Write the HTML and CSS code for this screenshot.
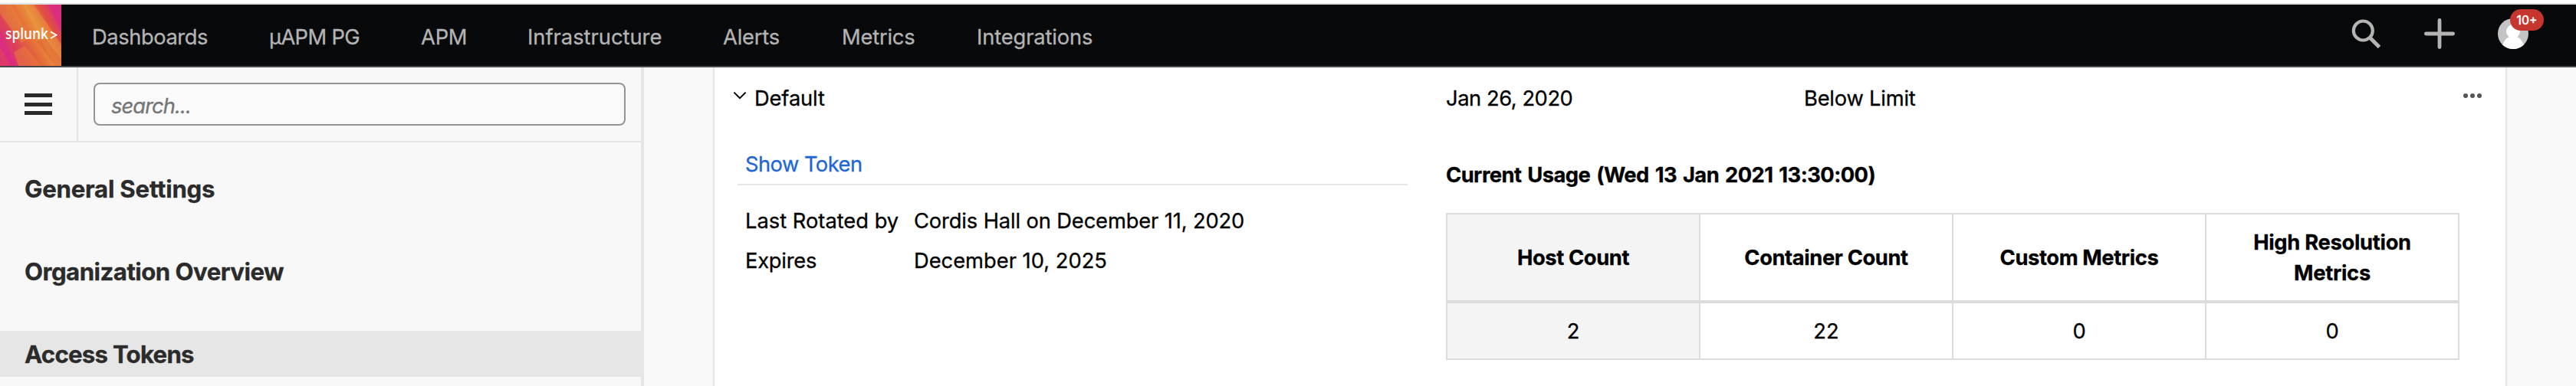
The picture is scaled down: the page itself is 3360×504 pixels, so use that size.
FILE: index.html
```html
<!DOCTYPE html>
<html lang="en">
<head>
<meta charset="utf-8">
<title>Access Tokens</title>
<link rel="stylesheet" href="styles.css">
</head>
<body>
<header class="topbar">
  <svg class="logo" viewBox="0 0 80 80" width="80" height="80">
    <defs>
      <linearGradient id="lg" x1="0" y1="0.75" x2="1" y2="0.2">
        <stop offset="0" stop-color="#d92c84"/>
        <stop offset=".22" stop-color="#dc4058"/>
        <stop offset=".45" stop-color="#e56c38"/>
        <stop offset=".62" stop-color="#e8903c"/>
        <stop offset=".8" stop-color="#e0503f"/>
        <stop offset="1" stop-color="#da2f80"/>
      </linearGradient>
    </defs>
    <rect width="80" height="80" fill="url(#lg)"/>
    <path d="M0 0h14l26 42-12 8L0 12z" fill="#e8873a" opacity=".55"/>
    <path d="M30 0h14l36 52v28h-8z" fill="#ea9a3e" opacity=".5"/>
    <path d="M18 62l14-8 22 26H24z" fill="#e8793a" opacity=".6"/>
    <path d="M0 34l22 46H0z" fill="#db2b86" opacity=".65"/>
    <path d="M0 56l14 24H0z" fill="#df3f62" opacity=".8"/>
    <path d="M62 0h18v36z" fill="#db2d80" opacity=".8"/>
    <path d="M48 48l10-5 22 28v9h-8z" fill="#dd5a34" opacity=".45"/>
    <text class="logo-text" x="7" y="45" textLength="56" lengthAdjust="spacingAndGlyphs">splunk</text>
    <path d="M66 35.4l7.4 4.3-7.4 4.3" fill="none" stroke="#fff" stroke-width="1.9"/>
  </svg>
  <nav class="nav">
    <a class="t42">Dashboards</a>
    <a class="t61">µAPM PG</a>
    <a class="t20">APM</a>
    <a class="t0">Infrastructure</a>
    <a class="t20">Alerts</a>
    <a class="t20">Metrics</a>
    <a class="t13">Integrations</a>
  </nav>
  <div class="tools">
    <svg class="tool-search" width="40" height="40" viewBox="0 0 40 40">
      <circle cx="16.3" cy="16" r="12.5" fill="none" stroke="#b3b4b3" stroke-width="4.2"/>
      <path d="M25 25l12.5 12.5" stroke="#b3b4b3" stroke-width="5"/>
    </svg>
    <svg class="tool-add" width="40" height="40" viewBox="0 0 40 40">
      <path d="M20 2.4v35.2M2.4 20h35.2" stroke="#b3b4b3" stroke-width="4.8" stroke-linecap="round"/>
    </svg>
    <div class="account">
      <svg width="40" height="40" viewBox="0 0 40 40">
        <defs><clipPath id="av"><circle cx="20" cy="20" r="20"/></clipPath></defs>
        <g clip-path="url(#av)">
          <rect width="40" height="40" fill="#c4c4c4"/>
          <circle cx="20" cy="17" r="9" fill="#fff"/>
          <path d="M6 36c2-8 6.500-12 11-12h6c4.500 0 9 4 11 12v6H6z" fill="#fff"/>
        </g>
      </svg>
      <span class="badge">10+</span>
    </div>
  </div>
</header>
<div class="page">
  <aside class="sidebar">
    <div class="side-head">
      <div class="menu-btn"><i></i><i></i><i></i></div>
      <div class="search-wrap"><div class="search">search...</div></div>
    </div>
    <div class="side-nav">
      <a class="t23">General Settings</a>
      <a class="t53">Organization Overview</a>
      <a class="t75 active">Access Tokens</a>
    </div>
  </aside>
  <main class="main">
    <section class="card">
      <div class="row">
        <div class="name">
          <svg width="18" height="12" viewBox="0 0 18 12"><path d="M1.400 1.600L9 9.200l7.600-7.600" fill="none" stroke="#000" stroke-width="2"/></svg>
          <span class="t13">Default</span>
        </div>
        <div class="t44">Jan 26, 2020</div>
        <div class="status t20">Below Limit</div>
        <svg class="more" width="24" height="6" viewBox="0 0 24 6"><g fill="#555"><circle cx="3" cy="3" r="3"/><circle cx="12" cy="3" r="3"/><circle cx="21" cy="3" r="3"/></g></svg>
      </div>
      <div class="details">
        <div class="token">
          <div class="show"><a class="t53">Show Token</a></div>
          <dl class="facts">
            <dt class="t0">Last Rotated by</dt><dd class="t13">Cordis Hall on December 11, 2020</dd>
            <dt class="t23">Expires</dt><dd class="t0">December 10, 2025</dd>
          </dl>
        </div>
        <div class="usage">
          <h3>Current Usage (Wed 13 Jan 2021 13:30:00)</h3>
          <table>
            <thead><tr><th class="t38 shade">Host Count</th><th class="t38">Container Count</th><th class="t38">Custom Metrics</th><th class="t28">High Resolution<br>Metrics</th></tr></thead>
            <tbody><tr><td class="shade">2</td><td>22</td><td>0</td><td>0</td></tr></tbody>
          </table>
        </div>
      </div>
    </section>
  </main>
</div>
</body>
</html>
```
FILE: styles.css
```css
* { box-sizing: border-box; }
body {
  margin: 0;
  height: 504px;
  overflow: hidden;
  background: #fff;
  color: #000;
  font: 27.3px/40px Inter, "Liberation Sans", sans-serif;
  -webkit-text-stroke: .3px currentColor;
}
svg { display: block; }

/* letter tracking */
.t0 { letter-spacing: 0; }
.t13 { letter-spacing: -.13px; }
.t20 { letter-spacing: -.2px; }
.t23 { letter-spacing: -.23px; }
.t28 { letter-spacing: -.28px; }
.t38 { letter-spacing: -.38px; }
.t42 { letter-spacing: -.42px; }
.t44 { letter-spacing: -.44px; }
.t53 { letter-spacing: -.53px; }
.t61 { letter-spacing: -.61px; }
.t75 { letter-spacing: -.75px; }

/* top bar */
.topbar {
  display: flex;
  height: 84px;
  margin-top: 4px;
  border-top: 2px solid #dfe1e2;
  border-bottom: 2px solid #47464b;
  background: #08090b;
  color: #b3b4b3;
}
.logo-text {
  font: 600 20px "Open Sans", sans-serif;
  fill: #fff;
  -webkit-text-stroke: 0;
}
.nav {
  display: grid;
  grid-template-columns: 231px 198px 139px 255px 155px 176px auto;
  padding: 23px 0 0 40px;
}
.tools {
  display: flex;
  margin-left: auto;
  padding: 18px 62px 0 0;
}
.tool-search { margin-right: 56px; }
.tool-add { margin-right: 56px; }
.account { position: relative; width: 40px; height: 40px; }
.badge {
  position: absolute;
  left: 16px;
  top: -12px;
  width: 44px;
  height: 28px;
  border-radius: 14px;
  background: #c6352e;
  color: #fff;
  font-size: 15.5px;
  font-weight: 500;
  line-height: 29px;
  text-align: center;
}

.page { display: flex; height: 416px; }

/* sidebar */
.sidebar {
  width: 840px;
  border-right: 4px solid #e6e6e6;
  background: #f8f8f8;
  color: #2b2b2b;
}
.side-head {
  display: flex;
  height: 98px;
  border-bottom: 2px solid #e6e6e6;
}
.menu-btn {
  display: flex;
  flex-direction: column;
  gap: 6.500px;
  width: 102px;
  padding: 34px 32px 0;
  border-right: 2px solid #e6e6e6;
}
.menu-btn i { width: 36px; height: 5px; background: #2b2b2b; }
.search-wrap { flex: 1; padding: 20px 20px 0; }
.search {
  height: 56px;
  padding: 5px 21px 0;
  border: 2px solid #949494;
  border-radius: 8px;
  background: #fafafa;
  color: #757575;
  font-style: italic;
  line-height: 48px;
  letter-spacing: -.9px;
}
.side-nav {
  display: flex;
  flex-direction: column;
  gap: 48px;
  padding-top: 30px;
}
.side-nav a {
  height: 60px;
  padding: 1px 0 0 32px;
  font-size: 31.2px;
  font-weight: 700;
  line-height: 60px;
}
.side-nav .active { background: #e6e6e6; }

/* content */
.main { flex: 1; padding: 0 90px; background: #f9f9f9; }
.card {
  height: 416px;
  padding-top: 21px;
  border: solid #e6e6e6;
  border-width: 0 2px;
  background: #fff;
}
.row {
  display: grid;
  grid-template-columns: 954px 467px 1fr auto;
  padding-right: 31px;
}
.name { display: flex; gap: 10px; padding-left: 24px; }
.name svg { margin-top: 10px; }
.more { margin-top: 13px; }
.details {
  display: grid;
  grid-template-columns: 874px 1322px;
  column-gap: 50px;
  padding-left: 30px;
}
.show {
  height: 93px;
  padding: 46px 0 0 10px;
  border-bottom: 2px solid #e6e6e6;
  color: #2167d3;
}
.facts {
  display: grid;
  grid-template-columns: 220px auto;
  row-gap: 12px;
  margin: 27px 0 0;
  padding-left: 10px;
}
.facts dd { margin: 0; }
.usage { padding-top: 60px; }
.usage h3 {
  margin: 0 0 29px;
  font-size: inherit;
  font-weight: 700;
  letter-spacing: -.54px;
  word-spacing: 2px;
}
table {
  width: 1322px;
  table-layout: fixed;
  border-collapse: separate;
  border-spacing: 0;
  border-left: 2px solid #dcdcdc;
  border-top: 2px solid #dcdcdc;
  text-align: center;
}
th, td { padding: 2px 0 0; border-right: 2px solid #dcdcdc; }
th { height: 116px; border-bottom: 4px solid #dcdcdc; font-weight: 700; }
td { height: 74px; border-bottom: 2px solid #dcdcdc; }
.shade { background: #f4f4f4; }
```
